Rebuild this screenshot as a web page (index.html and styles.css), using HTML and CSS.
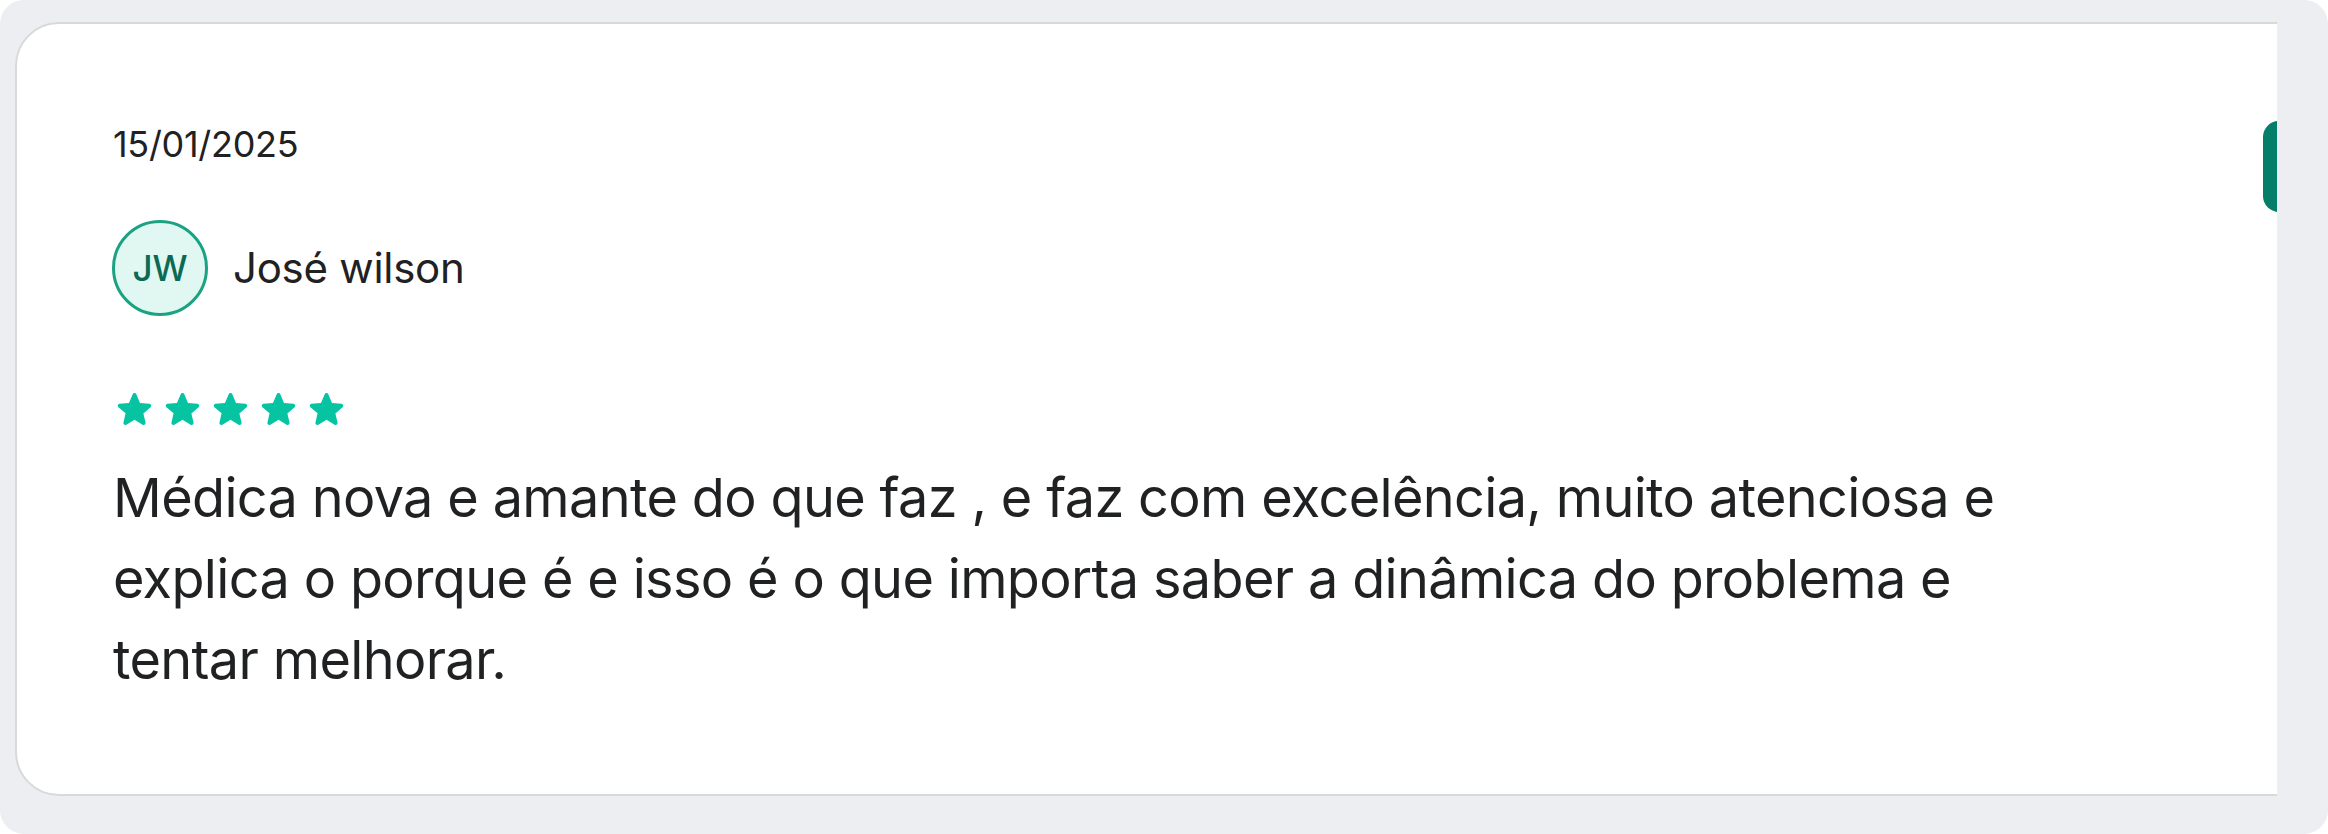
FILE: index.html
```html
<!DOCTYPE html>
<html lang="pt-BR">
<head>
<meta charset="utf-8">
<title>Avaliação</title>
<link rel="stylesheet" href="styles.css">
</head>
<body>
<div class="frame">
  <div class="viewport">
    <article class="card">
      <div class="date">15/01/2025</div>
      <div class="author">
        <div class="avatar">JW</div>
        <div class="name">José wilson</div>
      </div>
      <div class="stars">
        <svg viewBox="0 0 24 24"><path d="M12 17.27l4.15 2.51c.76.46 1.69-.22 1.49-1.08l-1.1-4.72 3.67-3.18c.67-.58.31-1.68-.57-1.75l-4.83-.41-1.89-4.46c-.34-.81-1.5-.81-1.84 0L9.19 8.63l-4.83.41c-.88.07-1.24 1.17-.57 1.75l3.670 3.18-1.1 4.72c-.2.86.73 1.54 1.49 1.08l4.15-2.5z"/></svg>
        <svg viewBox="0 0 24 24"><path d="M12 17.27l4.15 2.51c.76.46 1.69-.22 1.49-1.08l-1.1-4.72 3.67-3.18c.67-.58.31-1.68-.57-1.75l-4.83-.41-1.89-4.46c-.34-.81-1.5-.81-1.84 0L9.19 8.63l-4.83.41c-.88.07-1.24 1.17-.57 1.75l3.67 3.18-1.1 4.72c-.2.86.73 1.54 1.49 1.08l4.15-2.5z"/></svg>
        <svg viewBox="0 0 24 24"><path d="M12 17.27l4.15 2.51c.76.46 1.69-.22 1.49-1.08l-1.1-4.72 3.67-3.18c.67-.58.31-1.68-.57-1.75l-4.83-.41-1.89-4.46c-.34-.81-1.5-.81-1.84 0L9.19 8.63l-4.83.41c-.88.07-1.24 1.17-.57 1.75l3.67 3.18-1.1 4.72c-.2.86.73 1.54 1.49 1.08l4.15-2.5z"/></svg>
        <svg viewBox="0 0 24 24"><path d="M12 17.27l4.15 2.51c.76.46 1.69-.22 1.49-1.08l-1.1-4.72 3.67-3.18c.67-.58.31-1.68-.57-1.75l-4.83-.41-1.89-4.46c-.34-.81-1.5-.81-1.84 0L9.19 8.63l-4.83.41c-.88.07-1.24 1.17-.57 1.75l3.67 3.18-1.1 4.72c-.2.86.73 1.54 1.49 1.08l4.15-2.5z"/></svg>
        <svg viewBox="0 0 24 24"><path d="M12 17.27l4.15 2.51c.76.46 1.69-.22 1.49-1.08l-1.1-4.72 3.67-3.18c.67-.58.31-1.68-.57-1.75l-4.83-.41-1.89-4.46c-.34-.81-1.5-.81-1.84 0L9.19 8.63l-4.83.41c-.88.07-1.24 1.17-.57 1.75l3.67 3.18-1.1 4.72c-.2.86.73 1.54 1.49 1.08l4.15-2.5z"/></svg>
      </div>
      <p class="text">Médica nova e amante do que faz , e faz com excelência, muito atenciosa e explica o porque é e isso é o que importa saber a dinâmica do problema e tentar melhorar.</p>
    </article>
    <div class="next-tab"></div>
  </div>
</div>
</body>
</html>
```
FILE: styles.css
```css
* { box-sizing: border-box; }
html, body { margin: 0; padding: 0; background: #ffffff; }
body { font-family: Inter, "Noto Sans", "Liberation Sans", sans-serif; color: #1f2122; }

.frame {
  width: 2328px;
  height: 834px;
  background: #edeef2;
  border-radius: 24px;
  padding: 22px 51px 38px 15px;
}

.viewport {
  position: relative;
  height: 774px;
  overflow: hidden;
}

.card {
  width: 2500px;
  height: 774px;
  background: #ffffff;
  border: 2px solid #d8d9db;
  border-radius: 44px;
  padding: 96px 96px 0 96px;
}

.date {
  font-size: 36px;
  line-height: 48px;
  letter-spacing: -0.3px;
}

.author {
  display: flex;
  align-items: center;
  margin-top: 52px;
}

.avatar {
  width: 96px;
  height: 96px;
  border-radius: 50%;
  border: 3px solid #1ba283;
  background: #e0f8f1;
  color: #0b6a55;
  font-size: 35px;
  font-weight: 500;
  display: flex;
  align-items: center;
  justify-content: center;
  margin-left: -1px;
}

.name {
  margin-left: 25px;
  font-size: 42px;
  line-height: 56px;
  letter-spacing: -0.27px;
}

.stars {
  display: flex;
  gap: 1px;
  margin-top: 70px;
  margin-left: -2px;
}
.stars svg {
  width: 47px;
  height: 47px;
  fill: #06c3a2;
}

.text {
  margin: 24px 0 0 0;
  max-width: 1950px;
  font-size: 54px;
  line-height: 81px;
  letter-spacing: -0.65px;
}

.next-tab {
  position: absolute;
  top: 99px;
  right: -26px;
  width: 40px;
  height: 91px;
  border-radius: 16px;
  background: #047e69;
}
```
